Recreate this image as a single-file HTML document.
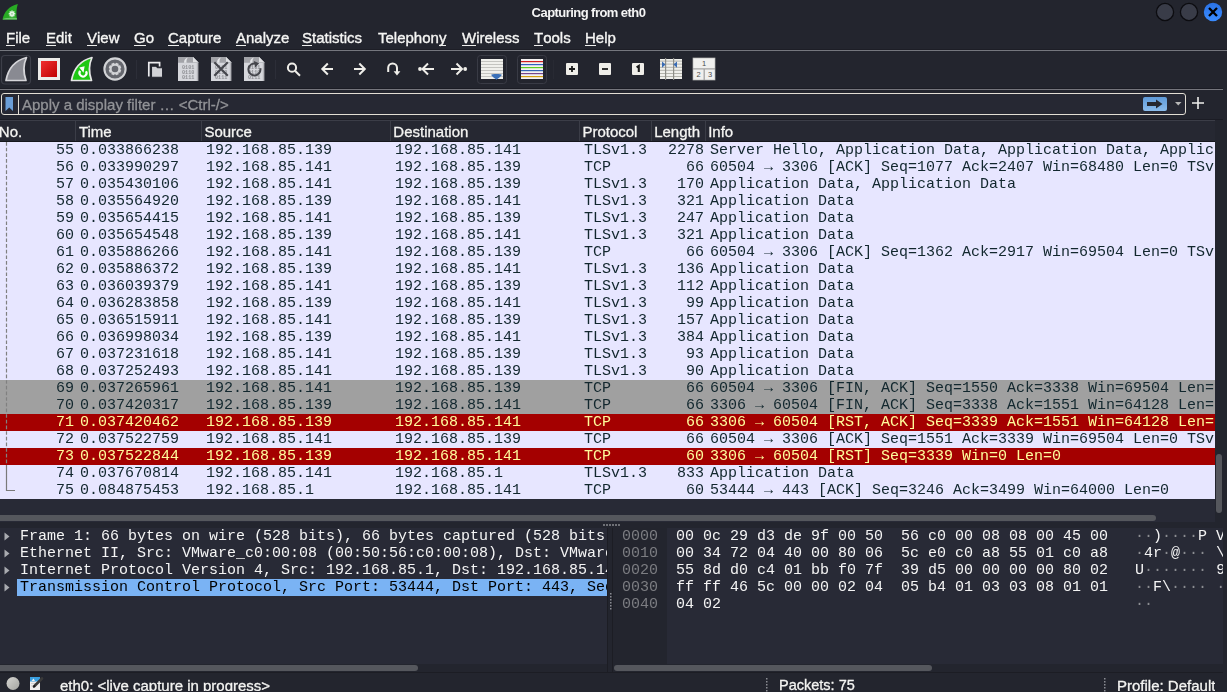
<!DOCTYPE html>
<html><head><meta charset="utf-8">
<style>
html,body{margin:0;padding:0;}
#plist,#det,#hex,.mi,#title,#ph,.st{will-change:transform;}
body{width:1227px;height:692px;overflow:hidden;background:#23252e;position:relative;font-family:"Liberation Sans",sans-serif;color:#eeeeec;}
.abs{position:absolute;}
#title{position:absolute;left:0;top:3.5px;width:1177px;text-align:center;font-weight:bold;font-size:13px;letter-spacing:-0.55px;line-height:17px;color:#f4f4f4;}
.mi{position:absolute;top:29px;font-size:15px;line-height:17px;white-space:nowrap;color:#f6f6f4;-webkit-text-stroke:0.35px #f6f6f4;}
.mi u{text-decoration:none;position:relative;}
.mi u::after{content:"";position:absolute;left:0;right:0;top:16px;height:1px;background:#eeeeec;}
.hline{position:absolute;left:0;height:1px;}
#filter{position:absolute;left:1px;top:93px;width:1185px;height:22px;box-sizing:border-box;border:1.5px solid #e2ded4;border-radius:3px;background:#262833;}
#ph{position:absolute;left:22px;top:96px;font-size:15px;line-height:17px;color:#929397;white-space:nowrap;-webkit-text-stroke:0.3px #929397;}
#plist{position:absolute;left:0;top:120px;width:1215px;height:402px;background:#282a36;overflow:hidden;}
#hdr{position:absolute;left:0;top:0;width:1215px;height:21px;background:#262832;border-top:1px solid #3b3d47;}
#hdr .hl{position:absolute;top:2px;font-size:15px;line-height:17px;white-space:nowrap;color:#f4f4f2;-webkit-text-stroke:0.3px #f4f4f2;}
#hdr .hs{position:absolute;top:0;width:1px;height:21px;background:#3b3d47;}
#hdrb{position:absolute;left:0;top:21px;width:1215px;height:1px;background:#15161c;}
#rows{position:absolute;left:0;top:22px;width:1215px;height:357px;overflow:hidden;}
.r{position:absolute;left:0;width:1215px;height:17px;background:#e7e6ff;color:#12272e;font-family:"Liberation Mono",monospace;font-size:15px;line-height:17px;white-space:nowrap;}
.r.g{background:#a0a0a0;}
.r.rst{background:#a40000;color:#fffc9c;}
.r span{position:absolute;top:-0.4px;}
.r .no{right:1141px;}
.r .tm{left:80px;}
.r .sr{left:206px;}
.r .ds{left:395px;}
.r .pr{left:584px;}
.r .ln{right:511px;}
.r .in{left:710px;width:504px;overflow:hidden;}
#det{position:absolute;left:0;top:528px;width:607px;height:136px;background:#282a36;overflow:hidden;}
.dr{position:absolute;left:0;width:607px;height:17px;font-family:"Liberation Mono",monospace;font-size:15px;line-height:17px;white-space:nowrap;color:#f4f4f4;}
.dr .tri{position:absolute;left:3px;top:0;}
.dr span{position:absolute;left:20px;top:-0.4px;}
.dr.sel::before{content:"";position:absolute;left:17px;top:0;width:590px;height:17px;background:#7ab3f4;}
.dr.sel span{color:#000;}
#hex{position:absolute;left:613px;top:528px;width:610px;height:136px;background:#282a36;overflow:hidden;}
#hexoff{position:absolute;left:0;top:0;width:54px;height:136px;background:#23252e;}
.hr{position:absolute;left:0;width:610px;height:17px;font-family:"Liberation Mono",monospace;font-size:15px;line-height:17px;white-space:pre;color:#f4f4f4;}
.hr span{position:absolute;top:-0.4px;}
.hr .off{left:9px;color:#7c7d82;}
.hr .hb{left:63px;}
.hr .as{left:522px;}
.hr i{font-style:normal;color:#8c8d92;}
.sb{position:absolute;background:#55575d;border-radius:3px;}
.st{position:absolute;top:677px;height:13.5px;overflow:hidden;font-size:15px;line-height:17px;white-space:nowrap;color:#f4f4f2;-webkit-text-stroke:0.3px #f4f4f2;}
</style></head><body>
<div id="title">Capturing from eth0</div>
<div class="mi" style="left:6.3px"><u>F</u>ile</div>
<div class="mi" style="left:46.1px"><u>E</u>dit</div>
<div class="mi" style="left:87px"><u>V</u>iew</div>
<div class="mi" style="left:133.5px"><u>G</u>o</div>
<div class="mi" style="left:167.6px"><u>C</u>apture</div>
<div class="mi" style="left:236.2px"><u>A</u>nalyze</div>
<div class="mi" style="left:301.5px"><u>S</u>tatistics</div>
<div class="mi" style="left:377.5px">Telephon<u>y</u></div>
<div class="mi" style="left:462.1px"><u>W</u>ireless</div>
<div class="mi" style="left:533.8px"><u>T</u>ools</div>
<div class="mi" style="left:585.3px"><u>H</u>elp</div>
<div class="hline" style="top:49px;width:1227px;background:#1d1e26"></div>
<div class="hline" style="top:50px;width:1227px;background:#75777e"></div>
<div class="hline" style="top:88px;width:1223px;background:#1b1c24"></div>
<div class="hline" style="top:89px;width:1223px;background:#75767d"></div>
<div id="filter"></div>
<div class="abs" style="left:18px;top:95px;width:1px;height:19px;background:#e2ded4"></div>
<div id="ph">Apply a display filter … &lt;Ctrl-/&gt;</div>
<div id="plist">
<div id="hdr">
<div class="hl" style="left:-1.2px">No.</div>
<div class="hl" style="left:78.9px">Time</div>
<div class="hl" style="left:204.4px">Source</div>
<div class="hl" style="left:393.3px">Destination</div>
<div class="hl" style="left:582.4px">Protocol</div>
<div class="hl" style="left:654.2px">Length</div>
<div class="hl" style="left:708.2px">Info</div>
<div class="hs" style="left:75px"></div>
<div class="hs" style="left:201px"></div>
<div class="hs" style="left:390px"></div>
<div class="hs" style="left:579px"></div>
<div class="hs" style="left:651px"></div>
<div class="hs" style="left:705px"></div>
</div>
<div id="hdrb"></div>
<div id="rows">
<div class="r n" style="top:0px"><span class="no">55</span><span class="tm">0.033866238</span><span class="sr">192.168.85.139</span><span class="ds">192.168.85.141</span><span class="pr">TLSv1.3</span><span class="ln">2278</span><span class="in">Server Hello, Application Data, Application Data, Application Data</span></div>
<div class="r n" style="top:17px"><span class="no">56</span><span class="tm">0.033990297</span><span class="sr">192.168.85.141</span><span class="ds">192.168.85.139</span><span class="pr">TCP</span><span class="ln">66</span><span class="in">60504 → 3306 [ACK] Seq=1077 Ack=2407 Win=68480 Len=0 TSval=1</span></div>
<div class="r n" style="top:34px"><span class="no">57</span><span class="tm">0.035430106</span><span class="sr">192.168.85.141</span><span class="ds">192.168.85.139</span><span class="pr">TLSv1.3</span><span class="ln">170</span><span class="in">Application Data, Application Data</span></div>
<div class="r n" style="top:51px"><span class="no">58</span><span class="tm">0.035564920</span><span class="sr">192.168.85.139</span><span class="ds">192.168.85.141</span><span class="pr">TLSv1.3</span><span class="ln">321</span><span class="in">Application Data</span></div>
<div class="r n" style="top:68px"><span class="no">59</span><span class="tm">0.035654415</span><span class="sr">192.168.85.141</span><span class="ds">192.168.85.139</span><span class="pr">TLSv1.3</span><span class="ln">247</span><span class="in">Application Data</span></div>
<div class="r n" style="top:85px"><span class="no">60</span><span class="tm">0.035654548</span><span class="sr">192.168.85.139</span><span class="ds">192.168.85.141</span><span class="pr">TLSv1.3</span><span class="ln">321</span><span class="in">Application Data</span></div>
<div class="r n" style="top:102px"><span class="no">61</span><span class="tm">0.035886266</span><span class="sr">192.168.85.141</span><span class="ds">192.168.85.139</span><span class="pr">TCP</span><span class="ln">66</span><span class="in">60504 → 3306 [ACK] Seq=1362 Ack=2917 Win=69504 Len=0 TSval=1</span></div>
<div class="r n" style="top:119px"><span class="no">62</span><span class="tm">0.035886372</span><span class="sr">192.168.85.139</span><span class="ds">192.168.85.141</span><span class="pr">TLSv1.3</span><span class="ln">136</span><span class="in">Application Data</span></div>
<div class="r n" style="top:136px"><span class="no">63</span><span class="tm">0.036039379</span><span class="sr">192.168.85.141</span><span class="ds">192.168.85.139</span><span class="pr">TLSv1.3</span><span class="ln">112</span><span class="in">Application Data</span></div>
<div class="r n" style="top:153px"><span class="no">64</span><span class="tm">0.036283858</span><span class="sr">192.168.85.139</span><span class="ds">192.168.85.141</span><span class="pr">TLSv1.3</span><span class="ln">99</span><span class="in">Application Data</span></div>
<div class="r n" style="top:170px"><span class="no">65</span><span class="tm">0.036515911</span><span class="sr">192.168.85.141</span><span class="ds">192.168.85.139</span><span class="pr">TLSv1.3</span><span class="ln">157</span><span class="in">Application Data</span></div>
<div class="r n" style="top:187px"><span class="no">66</span><span class="tm">0.036998034</span><span class="sr">192.168.85.139</span><span class="ds">192.168.85.141</span><span class="pr">TLSv1.3</span><span class="ln">384</span><span class="in">Application Data</span></div>
<div class="r n" style="top:204px"><span class="no">67</span><span class="tm">0.037231618</span><span class="sr">192.168.85.141</span><span class="ds">192.168.85.139</span><span class="pr">TLSv1.3</span><span class="ln">93</span><span class="in">Application Data</span></div>
<div class="r n" style="top:221px"><span class="no">68</span><span class="tm">0.037252493</span><span class="sr">192.168.85.141</span><span class="ds">192.168.85.139</span><span class="pr">TLSv1.3</span><span class="ln">90</span><span class="in">Application Data</span></div>
<div class="r g" style="top:238px"><span class="no">69</span><span class="tm">0.037265961</span><span class="sr">192.168.85.141</span><span class="ds">192.168.85.139</span><span class="pr">TCP</span><span class="ln">66</span><span class="in">60504 → 3306 [FIN, ACK] Seq=1550 Ack=3338 Win=69504 Len=0</span></div>
<div class="r g" style="top:255px"><span class="no">70</span><span class="tm">0.037420317</span><span class="sr">192.168.85.139</span><span class="ds">192.168.85.141</span><span class="pr">TCP</span><span class="ln">66</span><span class="in">3306 → 60504 [FIN, ACK] Seq=3338 Ack=1551 Win=64128 Len=0</span></div>
<div class="r rst" style="top:272px"><span class="no">71</span><span class="tm">0.037420462</span><span class="sr">192.168.85.139</span><span class="ds">192.168.85.141</span><span class="pr">TCP</span><span class="ln">66</span><span class="in">3306 → 60504 [RST, ACK] Seq=3339 Ack=1551 Win=64128 Len=0</span></div>
<div class="r n" style="top:289px"><span class="no">72</span><span class="tm">0.037522759</span><span class="sr">192.168.85.141</span><span class="ds">192.168.85.139</span><span class="pr">TCP</span><span class="ln">66</span><span class="in">60504 → 3306 [ACK] Seq=1551 Ack=3339 Win=69504 Len=0 TSval=1</span></div>
<div class="r rst" style="top:306px"><span class="no">73</span><span class="tm">0.037522844</span><span class="sr">192.168.85.139</span><span class="ds">192.168.85.141</span><span class="pr">TCP</span><span class="ln">60</span><span class="in">3306 → 60504 [RST] Seq=3339 Win=0 Len=0</span></div>
<div class="r n" style="top:323px"><span class="no">74</span><span class="tm">0.037670814</span><span class="sr">192.168.85.141</span><span class="ds">192.168.85.1</span><span class="pr">TLSv1.3</span><span class="ln">833</span><span class="in">Application Data</span></div>
<div class="r n" style="top:340px"><span class="no">75</span><span class="tm">0.084875453</span><span class="sr">192.168.85.1</span><span class="ds">192.168.85.141</span><span class="pr">TCP</span><span class="ln">60</span><span class="in">53444 → 443 [ACK] Seq=3246 Ack=3499 Win=64000 Len=0</span></div>
</div>
</div>
<div class="hline" style="top:119px;width:1223px;background:#1b1c24"></div>
<div class="sb" style="left:0;top:515px;width:1156px;height:6px;border-radius:0 3px 3px 0"></div>
<div class="sb" style="left:1216px;top:454px;width:6px;height:59px"></div>
<div id="det">
<div class="dr" style="top:0px"><svg class="tri" width="8" height="17"><path d="M1.5 4.5 L6.5 8.5 L1.5 12.5Z" fill="#a9abb0"/></svg><span>Frame 1: 66 bytes on wire (528 bits), 66 bytes captured (528 bits) on interface eth0, id 0</span></div>
<div class="dr" style="top:17px"><svg class="tri" width="8" height="17"><path d="M1.5 4.5 L6.5 8.5 L1.5 12.5Z" fill="#a9abb0"/></svg><span>Ethernet II, Src: VMware_c0:00:08 (00:50:56:c0:00:08), Dst: VMware_d3:de:9f (00:0c:29:d3:de:9f)</span></div>
<div class="dr" style="top:34px"><svg class="tri" width="8" height="17"><path d="M1.5 4.5 L6.5 8.5 L1.5 12.5Z" fill="#a9abb0"/></svg><span>Internet Protocol Version 4, Src: 192.168.85.1, Dst: 192.168.85.141</span></div>
<div class="dr sel" style="top:51px"><svg class="tri" width="8" height="17"><path d="M1.5 4.5 L6.5 8.5 L1.5 12.5Z" fill="#a9abb0"/></svg><span>Transmission Control Protocol, Src Port: 53444, Dst Port: 443, Seq: 1, Ack: 1, Len: 0</span></div>
</div>
<div id="hex"><div id="hexoff"></div>
<div class="hr" style="top:0px"><span class="off">0000</span><span class="hb">00 0c 29 d3 de 9f 00 50  56 c0 00 08 08 00 45 00</span><span class="as"><i>·</i><i>·</i>)<i>·</i><i>·</i><i>·</i><i>·</i>P V<i>·</i><i>·</i><i>·</i><i>·</i><i>·</i>E<i>·</i></span></div>
<div class="hr" style="top:17px"><span class="off">0010</span><span class="hb">00 34 72 04 40 00 80 06  5c e0 c0 a8 55 01 c0 a8</span><span class="as"><i>·</i>4r<i>·</i>@<i>·</i><i>·</i><i>·</i> \<i>·</i><i>·</i><i>·</i>U<i>·</i><i>·</i><i>·</i></span></div>
<div class="hr" style="top:34px"><span class="off">0020</span><span class="hb">55 8d d0 c4 01 bb f0 7f  39 d5 00 00 00 00 80 02</span><span class="as">U<i>·</i><i>·</i><i>·</i><i>·</i><i>·</i><i>·</i><i>·</i> 9<i>·</i><i>·</i><i>·</i><i>·</i><i>·</i><i>·</i><i>·</i></span></div>
<div class="hr" style="top:51px"><span class="off">0030</span><span class="hb">ff ff 46 5c 00 00 02 04  05 b4 01 03 03 08 01 01</span><span class="as"><i>·</i><i>·</i>F\<i>·</i><i>·</i><i>·</i><i>·</i> <i>·</i><i>·</i><i>·</i><i>·</i><i>·</i><i>·</i><i>·</i><i>·</i></span></div>
<div class="hr" style="top:68px"><span class="off">0040</span><span class="hb">04 02</span><span class="as"><i>·</i><i>·</i></span></div>
</div>
<div class="sb" style="left:0;top:665px;width:418px;height:6px;border-radius:0 3px 3px 0"></div>
<div class="abs" style="left:607px;top:528px;width:1px;height:145px;background:#1c1d24"></div>
<div class="abs" style="left:612px;top:528px;width:1px;height:145px;background:#1c1d24"></div>
<div class="sb" style="left:614px;top:665px;width:318px;height:6px"></div>
<div class="st" style="left:60px">eth0: &lt;live capture in progress&gt;</div>
<div class="st" style="left:779px;font-size:14.5px">Packets: 75</div>
<div class="hline" style="top:672px;width:1223px;background:#1c1d24"></div>
<div class="st" style="left:1117px">Profile: Default</div>
<svg class="abs" style="left:0;top:0" width="1227" height="692" viewBox="0 0 1227 692">
<defs>
<linearGradient id="gfin" x1="0" y1="0" x2="0" y2="1"><stop offset="0" stop-color="#5fd04a"/><stop offset="1" stop-color="#1f8a1a"/></linearGradient>
<linearGradient id="gred" x1="0" y1="0" x2="1" y2="1"><stop offset="0" stop-color="#f03030"/><stop offset="1" stop-color="#c00000"/></linearGradient>
<linearGradient id="gblue" x1="0" y1="0" x2="0" y2="1"><stop offset="0" stop-color="#2a72e6"/><stop offset="1" stop-color="#3a8cff"/></linearGradient>
<linearGradient id="gapply" x1="0" y1="0" x2="0" y2="1"><stop offset="0" stop-color="#5f9ad8"/><stop offset="1" stop-color="#8bbcec"/></linearGradient>
<linearGradient id="gfile" x1="0" y1="0" x2="0" y2="1"><stop offset="0" stop-color="#c6c7cb"/><stop offset="1" stop-color="#d8d9dd"/></linearGradient>
</defs>
<!-- app logo -->
<path d="M2.5 19.5 C4 12 9 6 17.8 4 C16.3 9 16 14 17 19.5 Z" fill="#28aa24"/><path d="M2.6 19.5 C3 18 10 17.2 16.8 18 L17 19.5 Z" fill="#6cc66a"/>
<g transform="translate(12 13.8)" fill="#e4f4e4"><circle r="2.4"/><rect x="-0.7" y="-3.3" width="1.4" height="1.4"/><g transform="rotate(45)"><rect x="-0.7" y="-3.3" width="1.4" height="1.4"/></g><g transform="rotate(90)"><rect x="-0.7" y="-3.3" width="1.4" height="1.4"/></g><g transform="rotate(135)"><rect x="-0.7" y="-3.3" width="1.4" height="1.4"/></g><g transform="rotate(180)"><rect x="-0.7" y="-3.3" width="1.4" height="1.4"/></g><g transform="rotate(225)"><rect x="-0.7" y="-3.3" width="1.4" height="1.4"/></g><g transform="rotate(270)"><rect x="-0.7" y="-3.3" width="1.4" height="1.4"/></g><g transform="rotate(315)"><rect x="-0.7" y="-3.3" width="1.4" height="1.4"/></g></g><circle cx="12" cy="13.8" r="0.9" fill="#8fcf8f"/>
<!-- window buttons -->
<circle cx="1165" cy="12" r="8.6" fill="#393c48" stroke="#0c0c10" stroke-width="1.3"/>
<circle cx="1189" cy="12" r="8.6" fill="#393c48" stroke="#0c0c10" stroke-width="1.3"/>
<circle cx="1213" cy="12" r="9.2" fill="url(#gblue)"/>
<path d="M1209.8 8.8 L1216.2 15.2 M1216.2 8.8 L1209.8 15.2" stroke="#000" stroke-width="2.3" stroke-linecap="square"/>
<!-- toolbar: start (disabled, framed) -->
<rect x="1.5" y="55.5" width="29" height="28.5" rx="3.5" fill="none" stroke="#3d3f49" stroke-width="1.2"/>
<path d="M6 80.5 C8 69 15 60.5 26.5 57.5 C23.5 64 23 72 26 80.5 Z" fill="#898a92" stroke="#d6d6da" stroke-width="1.7" stroke-linejoin="round"/>
<!-- stop -->
<rect x="38" y="58" width="22" height="22" fill="#ecebe8"/>
<rect x="41" y="61" width="16" height="16" fill="url(#gred)"/>
<!-- restart -->
<path d="M71.5 80.5 C73.5 69 80.5 60.5 92 57.5 C89 64 88.5 72 91.5 80.5 Z" fill="#1ec814" stroke="#e6e6e6" stroke-width="1.7" stroke-linejoin="round"/>
<path d="M86.03 71.25 A3.5 3.5 0 1 1 80.13 70.99" fill="none" stroke="#fff" stroke-width="2.2"/>
<path d="M79.3 67.6 L84.6 66.3 L83.5 72.8 Z" fill="#fff"/>
<!-- options gear -->
<circle cx="115" cy="69" r="10.6" fill="#65676e" stroke="#d2d3d6" stroke-width="2.1"/>
<path d="M115.06 64.10 L116.10 62.70 L118.68 63.76 L118.42 65.49 L118.51 65.58 L120.24 65.32 L121.30 67.90 L119.90 68.94 L119.90 69.06 L121.30 70.10 L120.24 72.68 L118.51 72.42 L118.42 72.51 L118.68 74.24 L116.10 75.30 L115.06 73.90 L114.94 73.90 L113.90 75.30 L111.32 74.24 L111.58 72.51 L111.49 72.42 L109.76 72.68 L108.70 70.10 L110.10 69.06 L110.10 68.94 L108.70 67.90 L109.76 65.32 L111.49 65.58 L111.58 65.49 L111.32 63.76 L113.90 62.70 L114.94 64.10 Z" fill="#d2d3d6"/><circle cx="115" cy="69" r="3.3" fill="#65676e"/>
<!-- separator -->
<rect x="136" y="60" width="1" height="19" fill="#2c2e38"/>
<!-- open -->
<path d="M148.8 76.5 V62.6 H159.6 V66.5" fill="none" stroke="#ececee" stroke-width="1.7"/>
<path d="M151.5 77.3 V66.3 H156.2 L157.7 67.8 H162.6 V77.3 Z" fill="#d2d3d7" stroke="#23252e" stroke-width="1.1"/>
<!-- file icons -->
<g>
<path d="M178 57 H193 L198.2 62.2 V81 H178 Z" fill="#d6d7dc"/>
<path d="M178 57 H193 L198.2 62.2 V62.8 H178 Z" fill="#a3a4a9"/>
<path d="M184 62.8 C184 60 185.5 58.2 188 57.6 C186.5 59 186.3 61 186.6 62.8 Z" fill="#e4e5e8"/>
<path d="M193 57 V62.2 H198.2 Z" fill="#e0e1e4"/>
<rect x="196.8" y="62.8" width="1.4" height="18.2" fill="#b4b5ba"/>
<g fill="#8f9095" font-family="Liberation Mono" font-size="5.2" font-weight="bold">
<text x="182" y="68.6">0101</text><text x="182" y="74">0110</text><text x="182" y="79.4">0111</text>
</g>
</g>
<g transform="translate(33 0)">
<path d="M178 57 H193 L198.2 62.2 V81 H178 Z" fill="#d6d7dc"/>
<path d="M178 57 H193 L198.2 62.2 V62.8 H178 Z" fill="#a3a4a9"/>
<path d="M184 62.8 C184 60 185.5 58.2 188 57.6 C186.5 59 186.3 61 186.6 62.8 Z" fill="#e4e5e8"/>
<path d="M193 57 V62.2 H198.2 Z" fill="#e0e1e4"/>
<rect x="196.8" y="62.8" width="1.4" height="18.2" fill="#b4b5ba"/>
<g fill="#8f9095" font-family="Liberation Mono" font-size="5.2" font-weight="bold">
<text x="182" y="68.6">0101</text><text x="182" y="74">0110</text><text x="182" y="79.4">0111</text>
</g>
</g>
<path d="M214.3 62.3 L227.8 75.8 M227.8 62.3 L214.3 75.8" stroke="#45464c" stroke-width="2.1"/>
<g transform="translate(66 0)">
<path d="M178 57 H193 L198.2 62.2 V81 H178 Z" fill="#d6d7dc"/>
<path d="M178 57 H193 L198.2 62.2 V62.8 H178 Z" fill="#a3a4a9"/>
<path d="M184 62.8 C184 60 185.5 58.2 188 57.6 C186.5 59 186.3 61 186.6 62.8 Z" fill="#e4e5e8"/>
<path d="M193 57 V62.2 H198.2 Z" fill="#e0e1e4"/>
<rect x="196.8" y="62.8" width="1.4" height="18.2" fill="#b4b5ba"/>
<g fill="#8f9095" font-family="Liberation Mono" font-size="5.2" font-weight="bold">
<text x="182" y="68.6">0101</text><text x="182" y="74">0110</text><text x="182" y="79.4">0111</text>
</g>
</g>
<path d="M256.5 63.8 A6 6 0 1 0 260.3 68.2" fill="none" stroke="#45464c" stroke-width="2"/>
<path d="M253.8 61 L259.2 63.2 L255.2 67.4 Z" fill="#45464c"/>
<rect x="275" y="60" width="1" height="19" fill="#2c2e38"/>
<!-- search -->
<g stroke="#efeee9" stroke-width="2" fill="none">
<circle cx="292" cy="67.7" r="4.1"/>
<path d="M295.2 71 L300 75.8"/>
<!-- back -->
<path d="M322.3 69 H333 M327.8 63.5 L322.3 69 L327.8 74.5"/>
<!-- forward -->
<path d="M354 69 H364.8 M359.3 63.5 L364.8 69 L359.3 74.5"/>
<!-- jump -->
<path d="M388.2 72 V67.8 A4.4 4.4 0 0 1 397 67.8 V72"/>
<!-- first -->
<path d="M423 69 H434 M428 63.5 L422.5 69 L428 74.5"/>
<!-- last -->
<path d="M451 69 H461.5 M456.5 63.5 L462 69 L456.5 74.5"/>
</g>
<circle cx="420" cy="69" r="1.9" fill="#efeee9"/>
<path d="M393.6 71.2 H400.4 L397 75.6 Z" fill="#efeee9"/>
<circle cx="465.2" cy="69" r="1.9" fill="#efeee9"/>
<!-- autoscroll framed -->
<rect x="477.5" y="55.5" width="29" height="28" rx="3" fill="none" stroke="#393b45" stroke-width="1"/>
<rect x="481" y="59" width="22" height="20" fill="#f0f0ec"/>
<g fill="#c4c4c0"><rect x="481" y="61" width="22" height="1"/><rect x="481" y="64" width="22" height="1"/><rect x="481" y="67" width="22" height="1"/><rect x="481" y="70" width="22" height="1"/><rect x="481" y="73" width="22" height="1"/><rect x="481" y="76" width="22" height="1"/></g>
<path d="M491.2 74.8 C491.2 73.6 501.8 73.6 501.8 74.8 C501.8 76 498 78.5 496.5 79.8 C495 78.5 491.2 76 491.2 74.8 Z" fill="#3a70b8"/>
<!-- colorize framed -->
<rect x="517.5" y="55.5" width="29" height="28" rx="3" fill="none" stroke="#393b45" stroke-width="1"/>
<rect x="521" y="59" width="22" height="20" fill="#f4f2f2"/>
<rect x="521" y="61" width="22" height="1.2" fill="#d02020"/>
<rect x="521" y="64" width="22" height="1.2" fill="#3060c0"/>
<rect x="521" y="67" width="22" height="1.2" fill="#5ccc20"/>
<rect x="521" y="70" width="22" height="1.2" fill="#3464b4"/>
<rect x="521" y="73" width="22" height="1.2" fill="#76468a"/>
<rect x="521" y="76" width="22" height="1.2" fill="#d4a010"/>
<rect x="553" y="60" width="1" height="19" fill="#282a33"/>
<!-- zoom in/out/normal -->
<rect x="566" y="63" width="12" height="12" rx="1" fill="#efeee9"/>
<path d="M569 69 H575 M572 66 V72" stroke="#1a1a1a" stroke-width="1.8"/>
<rect x="599" y="63" width="12" height="12" rx="1" fill="#efeee9"/>
<path d="M602 69 H608" stroke="#1a1a1a" stroke-width="1.8"/>
<rect x="632" y="63" width="12" height="12" rx="1" fill="#efeee9"/>
<path d="M636.6 67.4 L638.8 66 V72" fill="none" stroke="#1a1a1a" stroke-width="2.1"/>
<!-- resize columns -->
<rect x="660" y="59" width="22" height="20" fill="#f0f0ec"/>
<g fill="#b4b4ac"><rect x="660" y="60.6" width="22" height="1"/><rect x="660" y="63.6" width="22" height="1"/><rect x="660" y="66.8" width="22" height="1"/><rect x="660" y="69.8" width="22" height="1"/><rect x="660" y="73" width="22" height="1"/><rect x="660" y="76" width="22" height="1"/></g>
<rect x="665" y="58" width="1.2" height="22" fill="#8e8e88"/><rect x="673" y="58" width="1.2" height="22" fill="#8e8e88"/>
<path d="M662 61.5 L665.6 64.6 L662 67.8 Z M677 61.5 L673.4 64.6 L677 67.8 Z" fill="#3a6cb4"/>
<!-- layout -->
<rect x="693" y="58" width="22" height="22" fill="#f0f0ee" stroke="#b8b8b6" stroke-width="0.7"/>
<path d="M693 68.8 H715 M704.2 68.8 V80" stroke="#a4a4a4" stroke-width="1.3"/>
<g fill="#4a4a4a" font-family="Liberation Sans" font-size="7.5"><text x="702" y="66">1</text><text x="696.5" y="77.3">2</text><text x="708" y="77.3">3</text></g>
<!-- filter bookmark -->
<path d="M5.5 97 H13 V111 L9.25 107.5 L5.5 111 Z" fill="#6a9ed8"/>
<!-- apply button -->
<rect x="1143" y="97" width="24" height="14" rx="2" fill="url(#gapply)"/>
<path d="M1147 102 H1156 V99.5 L1162.5 104 L1156 108.5 V106 H1147 Z" fill="#26282f"/>
<path d="M1175 102 L1181.5 102 L1178.25 105.5 Z" fill="#b8b8b8"/>
<path d="M1192 103 H1204 M1198 97 V109" stroke="#eeeeec" stroke-width="1.6"/>
<!-- tree line -->
<path d="M6.5 142 V465" fill="none" stroke="#808080" stroke-width="1.2" stroke-dasharray="3.67 2"/><path d="M6.5 465 V490.5 H15" fill="none" stroke="#7a7a7a" stroke-width="1.2"/>
<!-- splitter handles -->
<g fill="#6e7076"><rect x="603" y="524" width="2" height="2"/><rect x="606" y="524" width="2" height="2"/><rect x="609" y="524" width="2" height="2"/><rect x="612" y="524" width="2" height="2"/><rect x="615" y="524" width="2" height="2"/><rect x="618" y="524" width="2" height="2"/></g>
<g fill="#8a8c92"><rect x="610" y="593" width="1.5" height="1.5"/><rect x="610" y="596" width="1.5" height="1.5"/><rect x="610" y="599" width="1.5" height="1.5"/><rect x="610" y="602" width="1.5" height="1.5"/><rect x="610" y="605" width="1.5" height="1.5"/><rect x="610" y="608" width="1.5" height="1.5"/></g>
<!-- status -->
<defs><linearGradient id="gcirc" x1="0" y1="0" x2="1" y2="1"><stop offset="0" stop-color="#d6d6d2"/><stop offset="1" stop-color="#a4a4a0"/></linearGradient></defs>
<circle cx="13" cy="683.5" r="6.5" fill="url(#gcirc)"/>
<rect x="30" y="677" width="10" height="13" fill="#eeeeee"/>
<rect x="30" y="677" width="10" height="4.5" fill="#3a9fe0"/>
<path d="M31.5 681 L33.5 678.5 L35 681 Z" fill="#eeeeee"/>
<g fill="#c8c8c8"><rect x="31" y="683" width="5" height="0.8"/><rect x="31" y="685.5" width="4" height="0.8"/></g>
<path d="M34 686.5 L42 678.5" stroke="#3a3a3a" stroke-width="2.6" stroke-linecap="round"/>
<path d="M33 687.5 L34.2 685 L35.5 686.3 Z" fill="#111"/>
<g fill="#8a8c92"><rect x="766" y="678" width="1.5" height="1.5"/><rect x="766" y="681" width="1.5" height="1.5"/><rect x="766" y="684" width="1.5" height="1.5"/><rect x="766" y="687" width="1.5" height="1.5"/><rect x="766" y="690" width="1.5" height="1.5"/></g>
<g fill="#8a8c92"><rect x="1104" y="678" width="1.5" height="1.5"/><rect x="1104" y="681" width="1.5" height="1.5"/><rect x="1104" y="684" width="1.5" height="1.5"/><rect x="1104" y="687" width="1.5" height="1.5"/><rect x="1104" y="690" width="1.5" height="1.5"/></g>
</svg>

</body></html>
